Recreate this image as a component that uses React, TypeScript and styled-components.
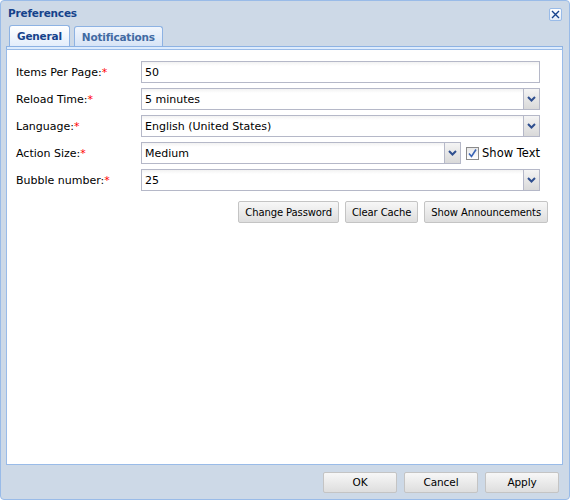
import React from "react";
import styled, { createGlobalStyle } from "styled-components";

const GlobalStyle = createGlobalStyle`
  html, body {
    margin: 0;
    padding: 0;
    background: #ffffff;
  }
  body {
    font-family: "DejaVu Sans", Tahoma, sans-serif;
    font-size: 11px;
    color: #000;
  }
`;

type Field = { label: string; value: string; kind: "text" | "combo" };

const fields: Field[] = [
  { label: "Items Per Page:", value: "50", kind: "text" },
  { label: "Reload Time:", value: "5 minutes", kind: "combo" },
  { label: "Language:", value: "English (United States)", kind: "combo" },
  { label: "Action Size:", value: "Medium", kind: "combo" },
  { label: "Bubble number:", value: "25", kind: "combo" },
];

const Chevron: React.FC = () => (
  <svg width="9" height="6" viewBox="0 0 9 6">
    <polyline
      points="1,1 4.5,4.5 8,1"
      fill="none"
      stroke="#2f4f8f"
      strokeWidth="2"
    />
  </svg>
);

const Combo: React.FC<{ value: string }> = ({ value }) => (
  <ComboWrap>
    <InputBox>{value}</InputBox>
    <Trigger>
      <Chevron />
    </Trigger>
  </ComboWrap>
);

const App: React.FC = () => {
  return (
    <>
      <GlobalStyle />
      <Window>
        <Header>
          <Title>Preferences</Title>
          <CloseBtn>
            <svg width="9" height="9" viewBox="0 0 9 9">
              <path d="M1 1 L8 8 M8 1 L1 8" stroke="#15428b" strokeWidth="1.4" />
            </svg>
          </CloseBtn>
        </Header>
        <TabStrip>
          <Tab $active>General</Tab>
          <Tab>Notifications</Tab>
        </TabStrip>
        <TabLine />
        <Body>
          <Form>
            {fields.map((f) => (
              <Row key={f.label}>
                <Label>
                  {f.label}
                  <Req>*</Req>
                </Label>
                {f.kind === "text" ? (
                  <InputBox $full>{f.value}</InputBox>
                ) : f.label === "Action Size:" ? (
                  <Inline>
                    <Combo value={f.value} />
                    <CheckLabel>
                      <CheckBox>
                        <svg width="9" height="9" viewBox="0 0 9 9">
                          <path
                            d="M1 4.5 L3.5 7.5 L8 0.5"
                            fill="none"
                            stroke="#3a64b4"
                            strokeWidth="1.6"
                          />
                        </svg>
                      </CheckBox>
                      Show Text
                    </CheckLabel>
                  </Inline>
                ) : (
                  <Combo value={f.value} />
                )}
              </Row>
            ))}
            <ActionRow>
              <Button>Change Password</Button>
              <Button>Clear Cache</Button>
              <Button>Show Announcements</Button>
            </ActionRow>
          </Form>
        </Body>
        <Footer>
          <FooterButton>OK</FooterButton>
          <FooterButton>Cancel</FooterButton>
          <FooterButton>Apply</FooterButton>
        </Footer>
      </Window>
    </>
  );
};

const Window = styled.div`
  box-sizing: border-box;
  width: 570px;
  height: 500px;
  background: #cdd9e7;
  border: 1px solid #99bbe8;
  border-radius: 4px;
  display: flex;
  flex-direction: column;
  padding: 0 6px 0 5px;
`;

const Header = styled.div`
  height: 24px;
  display: flex;
  align-items: center;
  justify-content: space-between;
  padding: 0 1px 0 2px;
`;

const Title = styled.div`
  font-weight: bold;
  color: #15428b;
  font-size: 10.5px;
  letter-spacing: -0.2px;
`;

const CloseBtn = styled.div`
  width: 13px;
  height: 13px;
  box-sizing: border-box;
  border: 1px solid #99bbe8;
  border-radius: 2px;
  background: linear-gradient(#ffffff, #e4ecf7);
  display: flex;
  align-items: center;
  justify-content: center;
  margin-top: 2px;
`;

const TabStrip = styled.div`
  display: flex;
  gap: 4px;
  padding-left: 3px;
  height: 21px;
  align-items: flex-end;
`;

const Tab = styled.div<{ $active?: boolean }>`
  box-sizing: border-box;
  height: ${(p) => (p.$active ? "21px" : "20px")};
  padding: 0 7px;
  display: flex;
  align-items: center;
  font-weight: bold;
  font-size: 10.5px;
  letter-spacing: -0.2px;
  color: ${(p) => (p.$active ? "#15428b" : "#416aa3")};
  border: 1px solid #8db2e3;
  border-bottom: none;
  border-radius: 3px 3px 0 0;
  background: ${(p) =>
    p.$active
      ? "linear-gradient(#ffffff, #e3edfb)"
      : "linear-gradient(#f1f6fd, #d7e4f6)"};
`;

const TabLine = styled.div`
  height: 2px;
  background: #deecfd;
  border-top: 1px solid #8db2e3;
  border-left: 1px solid #8db2e3;
  border-right: 1px solid #8db2e3;
`;

const Body = styled.div`
  flex: 1;
  background: #ffffff;
  border: 1px solid #99bbe8;
`;

const Form = styled.div`
  padding: 11px 22px 0 9px;
  display: flex;
  flex-direction: column;
  gap: 5px;
`;

const Row = styled.div`
  display: flex;
  align-items: center;
  height: 22px;
`;

const Label = styled.div`
  width: 125px;
  flex-shrink: 0;
  font-size: 11px;
`;

const Req = styled.span`
  color: #ff0000;
`;

const Inline = styled.div`
  flex: 1;
  display: flex;
  align-items: center;
  gap: 5px;
`;

const ComboWrap = styled.div`
  flex: 1;
  display: flex;
  height: 22px;
`;

const InputBox = styled.div<{ $full?: boolean }>`
  flex: 1;
  box-sizing: border-box;
  height: 22px;
  border: 1px solid #b5b8c8;
  ${(p) => (p.$full ? "" : "border-right: none;")}
  background: linear-gradient(#f2f2f2 0, #ffffff 4px);
  padding: 0 3px;
  display: flex;
  align-items: center;
  font-size: 11px;
`;

const Trigger = styled.div`
  width: 17px;
  box-sizing: border-box;
  border: 1px solid #b5b8c8;
  background: linear-gradient(#f4f4f4, #d9d9d9);
  display: flex;
  align-items: center;
  justify-content: center;
`;

const CheckLabel = styled.div`
  display: flex;
  align-items: center;
  gap: 3px;
  font-size: 11.5px;
  white-space: nowrap;
`;

const CheckBox = styled.div`
  width: 13px;
  height: 13px;
  box-sizing: border-box;
  border: 1px solid #8a8a8a;
  background: linear-gradient(#e8e8e8, #ffffff);
  display: flex;
  align-items: center;
  justify-content: center;
`;

const ActionRow = styled.div`
  display: flex;
  justify-content: flex-end;
  gap: 6px;
  margin-top: 5px;
  margin-right: -8px;
`;

const Button = styled.div`
  box-sizing: border-box;
  height: 22px;
  padding: 0 6px;
  border: 1px solid #c4c4c4;
  border-radius: 2px;
  background: linear-gradient(#f7f7f7, #dedede);
  display: flex;
  align-items: center;
  justify-content: center;
  font-size: 10px;
  letter-spacing: -0.1px;
  white-space: nowrap;
`;

const Footer = styled.div`
  height: 34px;
  display: flex;
  justify-content: flex-end;
  align-items: center;
  gap: 7px;
  padding-right: 4px;
`;

const FooterButton = styled(Button)`
  width: 74px;
  height: 21px;
  font-size: 10.5px;
`;

export default App;
